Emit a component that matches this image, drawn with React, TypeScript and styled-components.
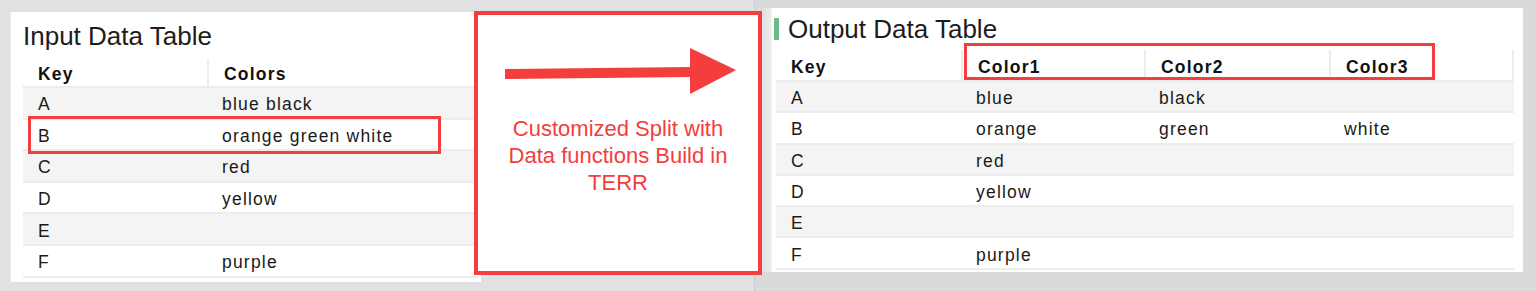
import styled, { createGlobalStyle } from 'styled-components';

const GlobalStyle = createGlobalStyle`
  html, body {
    margin: 0;
    padding: 0;
    background: #dcdcdc;
  }
  * {
    box-sizing: border-box;
  }
`;

const RED = '#f43d3d';

const Stage = styled.div`
  position: relative;
  width: 1536px;
  height: 291px;
  display: flex;
  overflow: hidden;
  font-family: 'Liberation Sans', Arial, sans-serif;
`;

const LeftShot = styled.div`
  width: 755px;
  height: 100%;
  background: #e1e1e1;
  padding: 12px 0 0 10px;
  border-right: 1px solid #cdcdcd;
`;

const RightShot = styled.div`
  flex: 1;
  height: 100%;
  background: #dadada;
  padding: 8px 13px 0 2px;
`;

const Panel = styled.div`
  position: relative;
  width: 471px;
  height: 270px;
  background: #ffffff;
  border-left: 1px solid #ececec;
  padding: 9px 0 0 12px;
`;

const OutputPanel = styled.div`
  position: relative;
  height: 264px;
  background: linear-gradient(90deg, #d9d9d9 0px, #ebebeb 14px, #ffffff 15px);
  padding: 6px 8px 0 19px;
`;

const TitleRow = styled.div`
  display: flex;
  align-items: center;
  gap: 9px;
  margin-left: -2px;
`;

const Marker = styled.span`
  width: 5px;
  height: 22px;
  background: #6dbb88;
`;

const Title = styled.div`
  font-size: 26px;
  line-height: 30px;
  color: #1c1c1c;
`;

const Table = styled.div<{ $top: number; $width: number }>`
  margin-top: ${(p) => p.$top}px;
  width: ${(p) => p.$width}px;
`;

const Row = styled.div<{ $cols: string; $height: number; $shade?: boolean }>`
  display: grid;
  grid-template-columns: ${(p) => p.$cols};
  height: ${(p) => p.$height}px;
  background: ${(p) => (p.$shade ? '#f4f4f4' : '#ffffff')};
  border-bottom: 2px solid #ececec;
`;

const Cell = styled.div<{ $head?: boolean; $first?: boolean }>`
  display: flex;
  align-items: center;
  padding: 4px 0 0 15px;
  font-size: 17.5px;
  letter-spacing: 1.2px;
  font-weight: ${(p) => (p.$head ? 700 : 400)};
  color: ${(p) => (p.$head ? '#111111' : '#1a1a1a')};
  white-space: nowrap;
  border-left: ${(p) => (p.$head && !p.$first ? '2px solid #ececec' : 'none')};
`;

const HeadCellEnd = styled(Cell)`
  border-right: 2px solid #ececec;
`;

/* red annotation frames drawn over the tables */
const Mark = styled.div<{ $x: number; $y: number; $w: number; $h: number }>`
  position: absolute;
  left: ${(p) => p.$x}px;
  top: ${(p) => p.$y}px;
  width: ${(p) => p.$w}px;
  height: ${(p) => p.$h}px;
  border: 3px solid ${RED};
  pointer-events: none;
`;

const Callout = styled.div`
  position: absolute;
  left: 474px;
  top: 11px;
  width: 288px;
  height: 264px;
  background: #ffffff;
  border: 4px solid ${RED};
  display: flex;
  flex-direction: column;
  align-items: center;
`;

const Arrow = styled.svg`
  margin-top: 30px;
  margin-left: 4px;
  flex-shrink: 0;
`;

const CalloutText = styled.div`
  margin-top: 18px;
  font-size: 22px;
  line-height: 27px;
  color: ${RED};
  text-align: center;
`;

type TableProps = {
  columns: string[];
  rows: string[][];
  cols: string;
  headHeight: number;
  rowHeight: number;
  top: number;
  width: number;
  closed?: boolean;
};

function DataTable({ columns, rows, cols, headHeight, rowHeight, top, width, closed }: TableProps) {
  return (
    <Table $top={top} $width={width}>
      <Row $cols={cols} $height={headHeight}>
        {columns.map((c, i) =>
          closed && i === columns.length - 1 ? (
            <HeadCellEnd key={c} $head>
              {c}
            </HeadCellEnd>
          ) : (
            <Cell key={c} $head $first={i === 0}>
              {c}
            </Cell>
          ),
        )}
      </Row>
      {rows.map((r, i) => (
        <Row key={r[0]} $cols={cols} $height={rowHeight} $shade={i % 2 === 0}>
          {r.map((v, j) => (
            <Cell key={j}>{v}</Cell>
          ))}
        </Row>
      ))}
    </Table>
  );
}

const inputRows = [
  ['A', 'blue black'],
  ['B', 'orange green white'],
  ['C', 'red'],
  ['D', 'yellow'],
  ['E', ''],
  ['F', 'purple'],
];

const outputRows = [
  ['A', 'blue', 'black', ''],
  ['B', 'orange', 'green', 'white'],
  ['C', 'red', '', ''],
  ['D', 'yellow', '', ''],
  ['E', '', '', ''],
  ['F', 'purple', '', ''],
];

export default function App() {
  return (
    <>
      <GlobalStyle />
      <Stage>
        <LeftShot>
          <Panel>
            <Title>Input Data Table</Title>
            <DataTable
              columns={['Key', 'Colors']}
              rows={inputRows}
              cols="184px 1fr"
              headHeight={29}
              rowHeight={31.6}
              top={8}
              width={455}
            />
            <Mark $x={17} $y={104} $w={413} $h={38} />
          </Panel>
        </LeftShot>
        <RightShot>
          <OutputPanel>
            <TitleRow>
              <Marker />
              <Title>Output Data Table</Title>
            </TitleRow>
            <DataTable
              columns={['Key', 'Color1', 'Color2', 'Color3']}
              rows={outputRows}
              cols="185px 183px 185px 185px"
              headHeight={32}
              rowHeight={31.3}
              top={6}
              width={738}
              closed
            />
            <Mark $x={207} $y={35} $w={471} $h={37} />
          </OutputPanel>
        </RightShot>
        <Callout>
          <Arrow width="240" height="52" viewBox="0 0 240 52">
            <polygon points="5,24 191,22 191,32 5,34" fill={RED} />
            <polygon points="190,3 236,25 190,49" fill={RED} />
          </Arrow>
          <CalloutText>
            Customized Split with
            <br />
            Data functions Build in
            <br />
            TERR
          </CalloutText>
        </Callout>
      </Stage>
    </>
  );
}
